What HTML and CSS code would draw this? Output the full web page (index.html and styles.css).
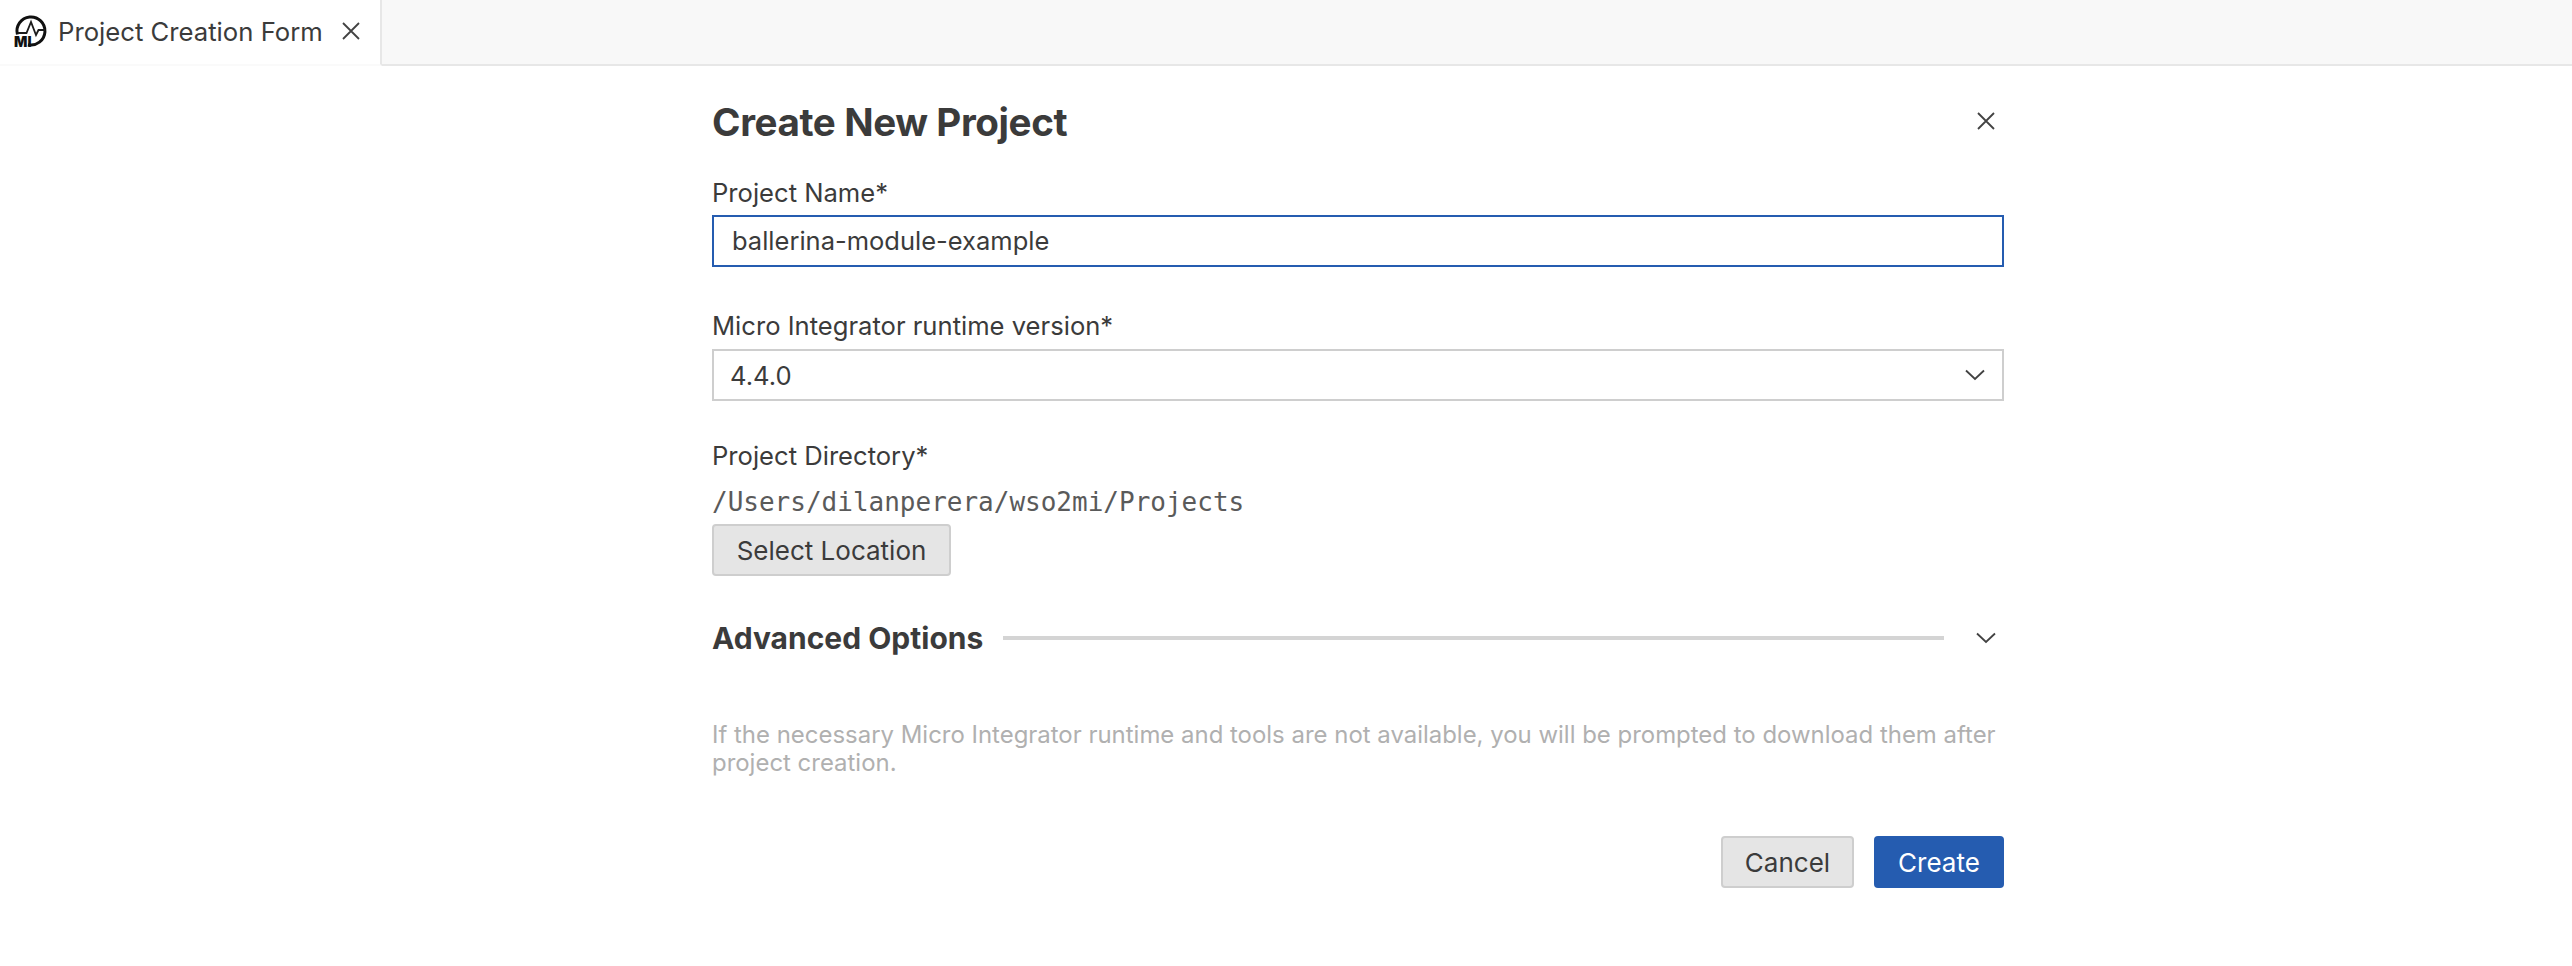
FILE: index.html
```html
<!DOCTYPE html>
<html lang="en">
<head>
  <meta charset="UTF-8">
  <title>Project Creation Form</title>
  <link rel="stylesheet" href="styles.css">
</head>
<body>
  <div class="tab-bar">
    <div class="tab">
      <svg class="tab-icon" viewBox="0 0 34 36" width="34" height="36">
        <path d="M4.4 21.5 A14 14 0 1 1 15 31.7" fill="none" stroke="#111" stroke-width="3"/>
        <path d="M5 20 H13.5 L18 9 L23 22 L25.5 17 H32" fill="none" stroke="#1c1c1c" stroke-width="1.8"/>
        <text class="tab-icon-text" x="1" y="34">MI</text>
      </svg>
      <span class="tab-label">Project Creation Form</span>
      <svg class="tab-close" viewBox="0 0 18 18" width="18" height="18">
        <path d="M1 1 L17 17 M17 1 L1 17" fill="none" stroke="#424242" stroke-width="1.8"/>
      </svg>
    </div>
  </div>

  <div class="form">
    <div class="form-header">
      <h1 class="form-title">Create New Project</h1>
      <svg class="icon-btn" viewBox="0 0 18 18" width="18" height="18">
        <path d="M1 1 L17 17 M17 1 L1 17" fill="none" stroke="#424242" stroke-width="1.8"/>
      </svg>
    </div>

    <div class="field field-name">
      <label class="field-label">Project Name*</label>
      <div class="text-input">ballerina-module-example</div>
    </div>

    <div class="field field-version">
      <label class="field-label">Micro Integrator runtime version*</label>
      <div class="select">
        <span>4.4.0</span>
        <svg viewBox="0 0 20 12" width="20" height="12">
          <path d="M1 1.5 L10 10 L19 1.5" fill="none" stroke="#424242" stroke-width="1.8"/>
        </svg>
      </div>
    </div>

    <div class="field field-dir">
      <label class="field-label">Project Directory*</label>
      <div class="dir-path">/Users/dilanperera/wso2mi/Projects</div>
      <button class="btn btn-secondary btn-location">Select Location</button>
    </div>

    <div class="advanced">
      <h2 class="advanced-title">Advanced Options</h2>
      <div class="advanced-line"></div>
      <svg class="advanced-toggle" viewBox="0 0 20 12" width="20" height="12">
        <path d="M1 1.5 L10 10 L19 1.5" fill="none" stroke="#424242" stroke-width="1.8"/>
      </svg>
    </div>

    <p class="hint">If the necessary Micro Integrator runtime and tools are not available, you will be prompted to download them after project creation.</p>

    <div class="actions">
      <button class="btn btn-secondary btn-cancel">Cancel</button>
      <button class="btn btn-primary">Create</button>
    </div>
  </div>
</body>
</html>
```

FILE: styles.css
```css
:root {
  --text: #3b3b3b;
  --primary: #255cb0;
  --border: #cecece;
  --button: #e5e5e5;
}

* {
  margin: 0;
  padding: 0;
  box-sizing: border-box;
}

body {
  font-family: Inter, 'Noto Sans', sans-serif;
  background: #fff;
  color: var(--text);
  font-size: 26px;
}

.tab-bar {
  height: 66px;
  background: #f8f8f8;
  border-bottom: 2px solid #e7e7e7;
  display: flex;
}

.tab {
  width: 382px;
  height: 66px;
  background: #fff;
  border-right: 2px solid #e7e7e7;
  border-bottom: 2px solid #fafafa;
  display: flex;
  align-items: center;
  padding: 0 0 2px 13px;
}

.tab-icon {
  flex: none;
  overflow: visible;
}

.tab-icon-text {
  font-size: 14px;
  font-weight: 900;
  fill: #111;
}

.tab-label {
  margin-left: 11px;
  font-size: 25.7px;
  white-space: nowrap;
}

.tab-close {
  margin-left: 19px;
  flex: none;
}

.form {
  width: 1292px;
  margin-left: 712px;
}

.form-header {
  display: flex;
  justify-content: space-between;
  align-items: center;
  padding-right: 9px;
  height: 50px;
  margin-top: 31px;
}

.form-title {
  font-size: 38.6px;
  font-weight: 700;
  letter-spacing: -0.4px;
}

.icon-btn {
  margin-top: -2px;
}

.field-label {
  display: block;
  font-size: 25.6px;
  line-height: 34px;
}

.field-name {
  margin-top: 29px;
}

.text-input {
  margin-top: 5px;
  height: 52px;
  border: 2px solid var(--primary);
  padding-left: 18px;
  line-height: 48px;
  font-size: 25.5px;
}

.field-version {
  margin-top: 42px;
}

.select {
  margin-top: 6px;
  height: 52px;
  border: 2px solid var(--border);
  display: flex;
  justify-content: space-between;
  align-items: center;
  padding: 0 17px 0 16px;
  font-size: 25.6px;
}

.field-dir {
  margin-top: 38px;
}

.dir-path {
  margin-top: 12px;
  font-family: 'DejaVu Sans Mono', monospace;
  font-size: 26px;
  line-height: 34px;
  color: #5a5a5a;
}

.btn {
  display: block;
  height: 52px;
  border-radius: 4px;
  font-family: inherit;
  font-size: 26px;
  text-align: center;
}

.btn-secondary {
  background: var(--button);
  border: 2px solid var(--border);
  color: var(--text);
}

.btn-primary {
  width: 130px;
  background: var(--primary);
  border: none;
  color: #fff;
}

.btn-location {
  width: 239px;
  margin-top: 5px;
}

.btn-cancel {
  width: 133px;
}

.advanced {
  display: flex;
  align-items: center;
  margin-top: 43px;
  height: 38px;
  padding-right: 8px;
}

.advanced-title {
  font-size: 30px;
  font-weight: 700;
  white-space: nowrap;
}

.advanced-line {
  width: 941px;
  height: 4px;
  margin-left: 20px;
  background: #d4d4d4;
}

.advanced-toggle {
  margin-left: auto;
}

.hint {
  margin-top: 64px;
  font-size: 23.94px;
  line-height: 28px;
  color: #b0b0b0;
}

.actions {
  display: flex;
  justify-content: flex-end;
  gap: 20px;
  margin-top: 59px;
}
```
